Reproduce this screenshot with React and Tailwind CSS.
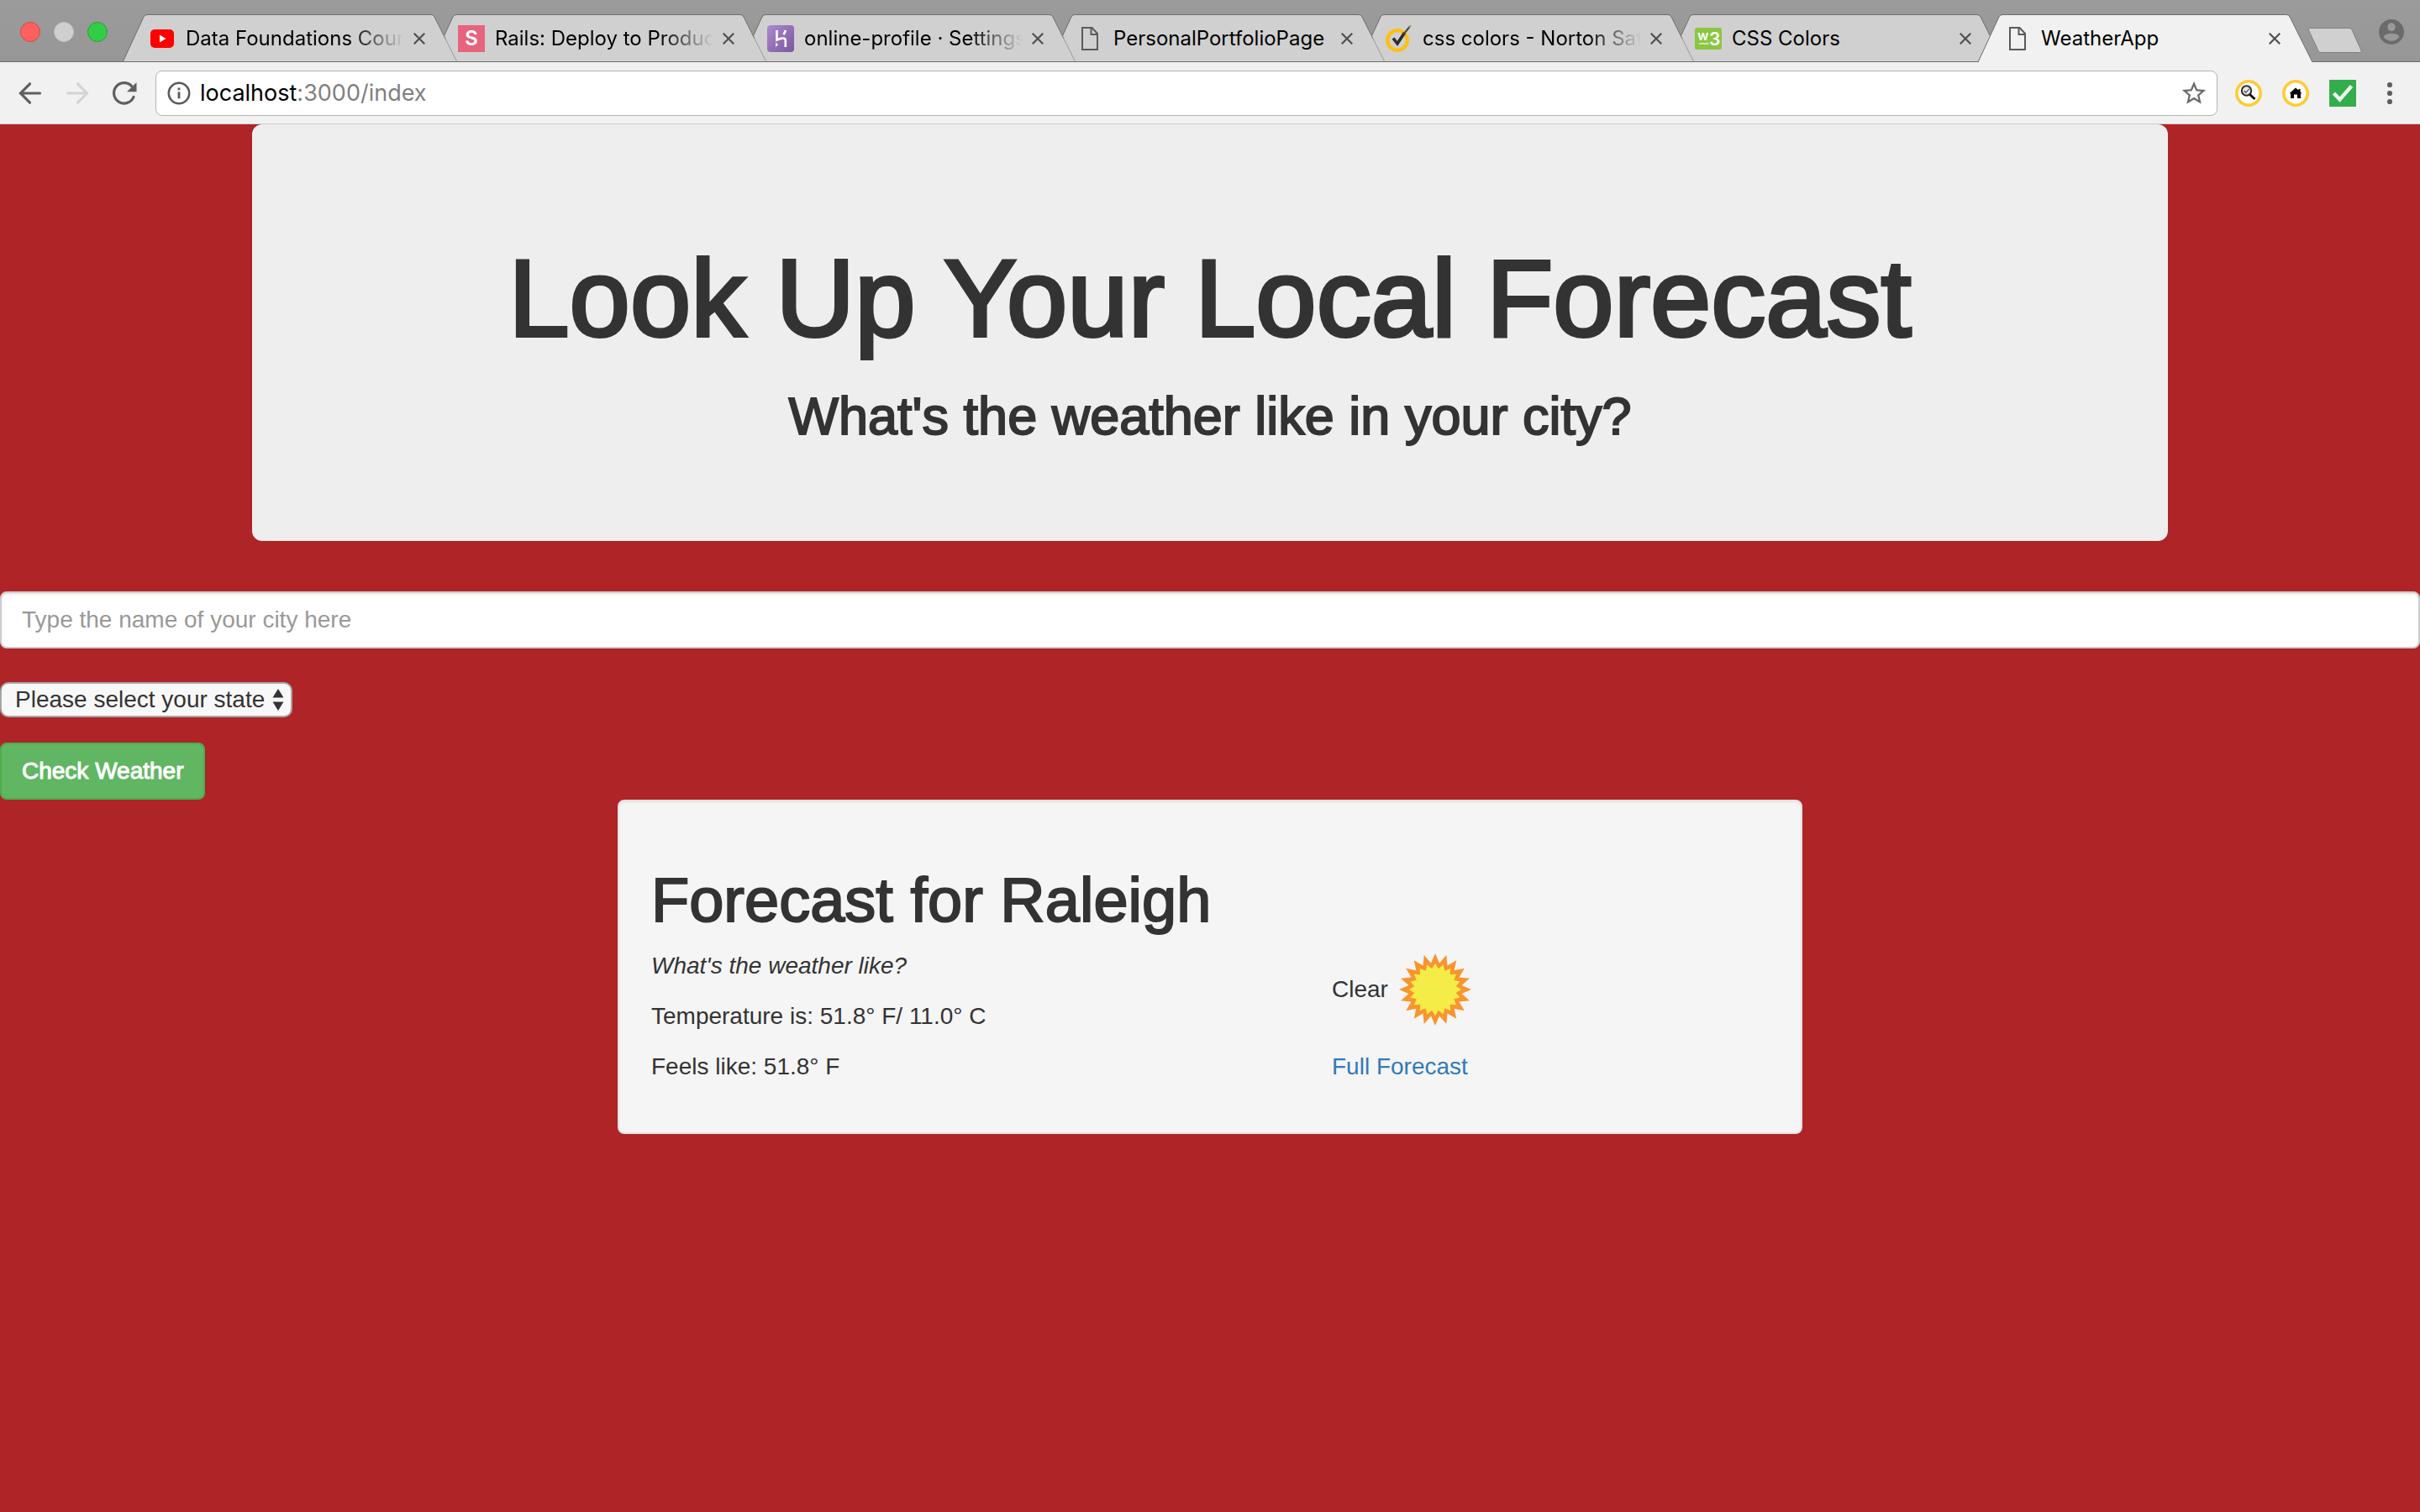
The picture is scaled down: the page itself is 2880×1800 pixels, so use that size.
import { useState } from "react";

function YouTubeIcon() {
  return (
    <svg viewBox="0 0 32 32" className="size-8">
      <rect x="2" y="5" width="28" height="22" rx="5" fill="#ff0000" />
      <path d="M13 11.5v9l7.5-4.5z" fill="#fff" />
    </svg>
  );
}

function RailsIcon() {
  return (
    <span className="flex size-8 items-center justify-center bg-[#e7647c] text-[24px] leading-8 font-semibold text-white">
      S
    </span>
  );
}

function HerokuIcon() {
  return (
    <svg viewBox="0 0 32 32" className="size-8">
      <defs>
        <linearGradient id="heroku" x1="0" y1="0" x2="1" y2="1">
          <stop offset="0" stopColor="#aa8bd0" />
          <stop offset="1" stopColor="#7d569d" />
        </linearGradient>
      </defs>
      <rect width="32" height="32" rx="4" fill="url(#heroku)" />
      <path d="M11.5 6v11.5c2.500-1.200 5-2 7.500-2 2 0 2.800 1 2.800 2.500v8M21.800 6c-.3 2-1.300 3.800-2.500 5.200" fill="none" stroke="#fff" strokeWidth="2.600" />
      <path d="M10.200 20.500v5.500l2.800-2.700z" fill="#fff" />
    </svg>
  );
}

function PageIcon() {
  return (
    <svg viewBox="0 0 32 32" className="size-8" fill="none" stroke="#5a5a5a" strokeWidth="2">
      <path d="M7 3h11.500l6.500 7v19H7z" />
      <path d="M17.500 3.500V11h7" />
    </svg>
  );
}

function NortonIcon() {
  return (
    <svg viewBox="0 0 32 32" className="size-8" fill="none">
      <circle cx="14" cy="18" r="11.800" stroke="#fdbf12" strokeWidth="4.200" />
      <path d="M9 15.500l5 6.500L22.500 9" stroke="#2b2b2b" strokeWidth="3.600" />
      <path d="M21.500 10.500L28.500 2" stroke="#4d483f" strokeWidth="2.200" />
      <path d="M28 2.600L30 0" stroke="#b08a4a" strokeWidth="1.800" />
    </svg>
  );
}

function W3Icon() {
  return (
    <svg viewBox="0 0 32 32" className="size-8">
      <rect y="3" width="32" height="26" rx="2.500" fill="#8ac640" />
      <text x="3" y="18" fontFamily="Inter, sans-serif" fontSize="16" fontWeight="600" fill="#fff">w</text>
      <text x="17" y="24" fontFamily="Inter, sans-serif" fontSize="21" fontWeight="600" fill="#fff">3</text>
      <text x="5" y="23" fontFamily="Inter, sans-serif" fontSize="3" fontWeight="700" fill="#fff">schools</text>
    </svg>
  );
}

const TABS = [
  { title: "Data Foundations Course", icon: YouTubeIcon, fade: true, z: "z-[6]" },
  { title: "Rails: Deploy to Production", icon: RailsIcon, fade: true, z: "z-[5]" },
  { title: "online-profile · Settings", icon: HerokuIcon, fade: true, z: "z-[4]" },
  { title: "PersonalPortfolioPage", icon: PageIcon, z: "z-[3]" },
  { title: "css colors - Norton Safe Search", icon: NortonIcon, fade: true, z: "z-[2]" },
  { title: "CSS Colors", icon: W3Icon, z: "z-[1]" },
  { title: "WeatherApp", icon: PageIcon, active: true, z: "z-[7]" },
];

function Tab({ title, icon: Icon, active, fade, z }) {
  return (
    <div className={`relative -mr-[30px] flex h-[57px] w-[398px] min-w-0 items-center pr-[33px] pl-[31px] ${z}`}>
      <svg viewBox="0 0 398 57" preserveAspectRatio="none" className="absolute inset-0 -z-10 h-full w-full">
        <path
          d="M0 57L25 3Q26.500.5 29 .5H367Q369.500.5 371 3L398 57Z"
          fill={active ? "#f1f1f1" : "#d0d0d0"}
        />
        <path d="M0 57L25 3Q26.500.5 29 .5H367Q369.500.5 371 3L384 29" fill="none" stroke="#6d6d6d" strokeWidth="1" />
        <path d="M384 29L398 57" fill="none" stroke={active ? "#6d6d6d" : "#999"} strokeWidth="1" />
        {!active && <path d="M0 56.500H398" stroke="#6d6d6d" />}
      </svg>
      <span className="shrink-0">
        <Icon />
      </span>
      <span
        className={`ml-3 min-w-0 flex-1 overflow-hidden text-[24px] leading-8 whitespace-nowrap text-black ${
          fade ? "[mask-image:linear-gradient(to_right,black_calc(100%-64px),transparent)]" : ""
        }`}
      >
        {title}
      </span>
      <button type="button" aria-label={`Close ${title}`} className="ml-1.5 flex size-6 shrink-0 items-center justify-center">
        <svg viewBox="0 0 14 14" className="size-3.5" stroke="#505050" strokeWidth="2.200">
          <path d="M.7.7l12.600 12.600M13.300.7L.7 13.300" />
        </svg>
      </button>
    </div>
  );
}

function TabStrip() {
  return (
    <header className="flex h-[74px] items-start border-b border-[#6d6d6d] bg-linear-to-b from-[#9b9b9b] to-[#979797]">
      <div className="flex shrink-0 gap-4 pt-[26px] pl-6">
        <button type="button" aria-label="Close window" className="size-6 rounded-full border border-[#e2463f] bg-[#fc615d]" />
        <button type="button" aria-label="Minimise window" className="size-6 rounded-full border border-[#c0c0c0] bg-[#cfcfcf]" />
        <button type="button" aria-label="Zoom window" className="size-6 rounded-full border border-[#23a534] bg-[#34cb49]" />
      </div>
      <nav aria-label="Tabs" className="relative isolate mt-[17px] ml-[18px] flex min-w-0">
        {TABS.map((t) => (
          <Tab key={t.title} {...t} />
        ))}
      </nav>
      <button type="button" aria-label="New tab" className="mt-8 ml-6 shrink-0">
        <svg viewBox="0 0 66 32" className="h-8 w-[66px]">
          <path d="M3 1.500H50Q52 1.500 53 3.500L64 28Q65 30.500 63 30.500H16Q14 30.500 13 28.500L1.500 4Q.5 1.500 3 1.500Z" fill="#d0d0d0" stroke="#808080" />
        </svg>
      </button>
      <button type="button" aria-label="Profile" className="mt-5 mr-4 ml-auto shrink-0">
        <svg viewBox="0 0 24 24" className="size-9" fill="#6b6b6b">
          <path d="M12 2a10 10 0 1 0 0 20 10 10 0 0 0 0-20zm0 2.800a3.100 3.300 0 1 1 0 6.600 3.100 3.300 0 0 1 0-6.600zm0 14.400c-2.500 0-4.900-1.300-6.200-3.200.4-2 3.700-2.800 6.200-2.800s5.800.8 6.200 2.800c-1.300 1.900-3.700 3.200-6.200 3.200z" />
        </svg>
      </button>
    </header>
  );
}

function Toolbar() {
  return (
    <div className="flex h-[74px] items-center border-b border-[#d0d0d0] bg-[#f1f1f1] pr-5 pl-4">
      <div className="mr-[17px] flex gap-4">
        <button type="button" aria-label="Back" className="size-10">
          <svg viewBox="0 0 40 40" fill="none" stroke="#5f5f5f" strokeWidth="3.200" strokeLinecap="round">
            <path d="M9 20H31.500M19.500 8.800L8.500 20l11 11.200" />
          </svg>
        </button>
        <button type="button" aria-label="Forward" className="size-10">
          <svg viewBox="0 0 40 40" fill="none" stroke="#d4d4d4" strokeWidth="3.200" strokeLinecap="round">
            <path d="M31 20H8.500M20.500 8.800L31.500 20l-11 11.200" />
          </svg>
        </button>
        <button type="button" aria-label="Reload" className="size-10">
          <svg viewBox="0 0 40 40">
            <path d="M31 24.500A12.200 12.200 0 1 1 28.500 11.300" fill="none" stroke="#5f5f5f" strokeWidth="3.200" strokeLinecap="round" />
            <path d="M34.500 7v11.200H23z" fill="#5f5f5f" />
          </svg>
        </button>
      </div>
      <div className="flex h-[54px] min-w-0 flex-1 items-center rounded-lg border border-[#b4b4b4] bg-white pr-2.5 pl-3">
        <svg viewBox="0 0 30 30" className="size-[30px] shrink-0">
          <circle cx="15" cy="15" r="12.200" fill="none" stroke="#5a5a5a" strokeWidth="2.600" />
          <path d="M15 13.300v8" stroke="#5a5a5a" strokeWidth="2.800" />
          <path d="M15 8.500v2.800" stroke="#5a5a5a" strokeWidth="2.800" />
        </svg>
        <a href="#index" className="ml-2.5 flex-1 truncate text-[27px] leading-9 text-[#808080]">
          <span className="text-black">localhost</span>:3000/index
        </a>
        <button type="button" aria-label="Bookmark this page" className="shrink-0">
          <svg viewBox="0 0 24 24" className="size-[34px]" fill="#6b6b6b">
            <path d="M22 9.240l-7.190-.62L12 2 9.190 8.630 2 9.240l5.460 4.730L5.820 21 12 17.270 18.180 21l-1.630-7.030L22 9.240zM12 15.400l-3.760 2.270 1-4.280-3.320-2.880 4.380-.38L12 6.100l1.710 4.040 4.380.38-3.320 2.880 1 4.280L12 15.400z" />
          </svg>
        </button>
      </div>
      <div className="ml-[21px] flex gap-6">
        <button type="button" aria-label="Safe search" className="size-8">
          <svg viewBox="0 0 32 32">
            <circle cx="16" cy="16" r="14.200" fill="#fff" stroke="#ffcb30" strokeWidth="3.600" />
            <circle cx="13.500" cy="13" r="5.700" fill="#e8e8e8" stroke="#2b2b2b" strokeWidth="2" />
            <path d="M10.500 13l2.300 2.300 3.800-4.500" fill="none" stroke="#555" strokeWidth="1.300" />
            <path d="M17.500 17.500l6 5.500" stroke="#111" strokeWidth="3" />
          </svg>
        </button>
        <button type="button" aria-label="Home page" className="size-8">
          <svg viewBox="0 0 32 32">
            <circle cx="16" cy="16" r="14.200" fill="#fff" stroke="#ffcb30" strokeWidth="3.600" />
            <path d="M16 9.500l3.500 3V11h2v3.300l2 1.900h-1.500V22h-4v-4.500h-4V22h-4v-5.800H8.500z" fill="#000" />
          </svg>
        </button>
        <button type="button" aria-label="Site rating" className="size-8">
          <svg viewBox="0 0 32 32">
            <rect width="32" height="32" fill="#33ae4d" />
            <path d="M5.500 16l7 7.500L26.500 7.500" fill="none" stroke="#eef5ee" strokeWidth="4.400" />
          </svg>
        </button>
        <button type="button" aria-label="Menu" className="size-8">
          <svg viewBox="0 0 32 32" fill="#5f5f5f">
            <circle cx="16" cy="6" r="3.100" />
            <circle cx="16" cy="16" r="3.100" />
            <circle cx="16" cy="26" r="3.100" />
          </svg>
        </button>
      </div>
    </div>
  );
}

function star(points, outer, inner) {
  return Array.from({ length: points * 2 }, (_, i) => {
    const r = i % 2 ? inner : outer;
    const a = (Math.PI * i) / points;
    return `${(50 + r * Math.sin(a)).toFixed(2)},${(50 - r * Math.cos(a)).toFixed(2)}`;
  }).join(" ");
}

function Sun() {
  return (
    <svg viewBox="0 0 100 100" className="size-[100px]" role="img" aria-label="Clear sky">
      <polygon points={star(20, 43, 32)} fill="#f8952f" />
      <polygon points={star(20, 31, 25)} fill="#f4ec47" />
    </svg>
  );
}

export default function App() {
  const [city, setCity] = useState("");
  return (
    <div className="flex min-h-screen flex-col bg-[#af2427] font-['Inter',sans-serif]">
      <TabStrip />
      <Toolbar />
      <main className="font-['Liberation_Sans',Arial,sans-serif] text-[28px] leading-10 text-[#333]">
        <section className="mx-auto max-w-[2280px] rounded-xl bg-[#eee] px-[120px] pt-[138px] pb-[116px] text-center">
          <h1 className="text-[130px] leading-[138px] [-webkit-text-stroke:4px_#333]">Look Up Your Local Forecast</h1>
          <h2 className="mt-[38px] text-[63px] leading-[66px] [-webkit-text-stroke:2px_#333]">
            What's the weather like in your city?
          </h2>
        </section>
        <form className="mt-[60px] flex flex-col items-start" onSubmit={(e) => e.preventDefault()}>
          <input
            type="text"
            aria-label="City"
            value={city}
            onChange={(e) => setCity(e.target.value)}
            placeholder="Type the name of your city here"
            className="h-[68px] w-full rounded-lg border-2 border-[#ccc] bg-white px-6 shadow-[inset_0_2px_2px_rgba(0,0,0,0.075)] placeholder:text-[#999]"
          />
          <div className="relative mt-10">
            <select
              aria-label="State"
              className="block h-[42px] w-[348px] appearance-none rounded-[10px] border-2 border-[#a6a6a6] bg-[#f8f8f8] pl-4 leading-9"
            >
              <option>Please select your state</option>
              <option>North Carolina</option>
            </select>
            <svg viewBox="0 0 14 26" className="pointer-events-none absolute top-2 right-2.5 h-[26px] w-3.5" fill="#333">
              <path d="M7 0l6.500 10.500H.5zM7 26L.5 15.500h13z" />
            </svg>
          </div>
          <button
            type="submit"
            className="mt-[30px] h-[68px] rounded-lg border-2 border-[#4cae4c] bg-[#60b662] px-6 text-white [-webkit-text-stroke:1px_white]"
          >
            Check Weather
          </button>
        </form>
        <section className="mx-auto max-w-[1410px] rounded-lg border-2 border-[#e3e3e3] bg-[#f5f5f5] px-[38px] pt-[78px] pb-[58px] shadow-[inset_0_2px_2px_rgba(0,0,0,0.05)]">
          <h1 className="text-[74px] leading-[80px] [-webkit-text-stroke:2px_#333]">Forecast for Raleigh</h1>
          <div className="mt-4 grid grid-cols-[810fr_520fr] items-end">
            <div className="flex flex-col gap-5">
              <p className="italic">What's the weather like?</p>
              <p>Temperature is: 51.8° F/ 11.0° C</p>
              <p>Feels like: 51.8° F</p>
            </div>
            <div className="flex flex-col gap-[22px]">
              <p className="flex items-center gap-1.5">
                Clear <Sun />
              </p>
              <p>
                <a href="#forecast" className="text-[#337ab7]">
                  Full Forecast
                </a>
              </p>
            </div>
          </div>
        </section>
      </main>
    </div>
  );
}
